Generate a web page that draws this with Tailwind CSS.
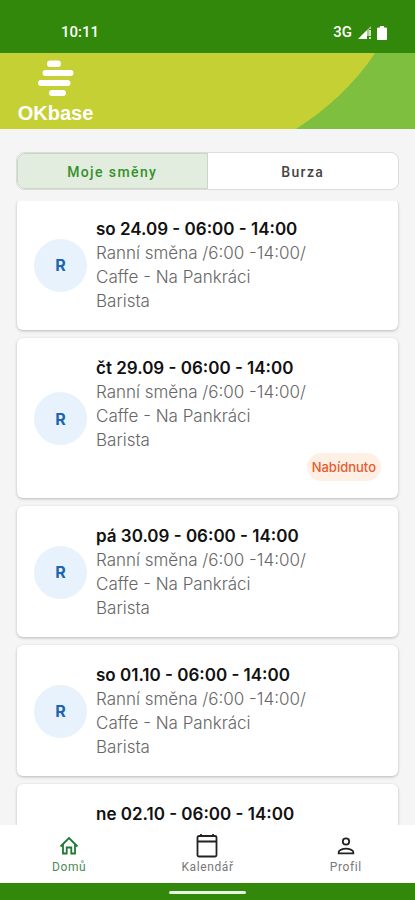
<!DOCTYPE html>
<html lang="cs">
<head>
<meta charset="utf-8">
<meta name="viewport" content="width=device-width, initial-scale=1">
<title>OKbase</title>
<script src="https://cdn.jsdelivr.net/npm/@tailwindcss/browser@4"></script>
</head>
<body class="flex h-screen flex-col overflow-hidden bg-[#f5f5f5] font-['Inter','Roboto',sans-serif]">
  <!-- Status bar -->
  <div class="flex h-[53px] shrink-0 items-center justify-between bg-[#31880a] pt-3 pr-7 pl-[61px] font-['Roboto',sans-serif] text-white">
    <span class="text-[15px] font-medium">10:11</span>
    <div class="flex items-center gap-1.5">
      <span class="text-[15px] font-medium">3G</span>
      <svg class="h-[13px] w-[13px]" viewBox="0 0 13 13" fill="currentColor" aria-hidden="true">
        <path d="M0 13 9 4v9z"/><path d="M9 4l4-4v3h-2v7H9z" opacity=".55"/><path d="M11 4h2v6h-2zM11 11h2v2h-2z" opacity=".75"/>
      </svg>
      <svg class="h-[14px] w-[10px]" viewBox="0 0 10 14" fill="currentColor" aria-hidden="true">
        <path d="M3 0h4v1.500h1.500c.8 0 1.500.5 1.500 1.300V13c0 .6-.4 1-1 1H1c-.6 0-1-.4-1-1V2.800C0 2 .7 1.500 1.500 1.500H3z"/>
      </svg>
    </div>
  </div>

  <!-- Brand header -->
  <header class="relative h-[76px] shrink-0 overflow-hidden bg-[#c5d034]">
    <svg class="absolute top-0 right-0 h-full w-[119px]" viewBox="0 0 119 76" aria-hidden="true">
      <path d="M79 0H119V76H0C31 56 58 32 79 0z" fill="#7fbf3f"/>
    </svg>
    <div class="relative flex w-[111px] flex-col items-center pt-[7px] text-white">
      <svg class="h-9 w-9" viewBox="0 0 36 36" fill="currentColor" aria-hidden="true">
        <rect x="9" y="0.500" width="14" height="6.500" rx="3.200"/>
        <rect x="4.500" y="10" width="31" height="6" rx="3"/>
        <rect x="0" y="20" width="32.500" height="6" rx="3"/>
        <rect x="11" y="30" width="17" height="6" rx="3"/>
      </svg>
      <span class="mt-[5px] text-xl leading-6 font-bold font-['Liberation_Sans',sans-serif]">OKbase</span>
    </div>
  </header>

  <!-- Tabs -->
  <div class="mx-4 mt-[23px] mb-[11px] grid h-[38px] shrink-0 grid-cols-2 overflow-hidden rounded-lg border border-[#dcdcdc] bg-white font-['Roboto',sans-serif] text-sm font-medium" role="tablist">
    <button class="rounded-l-lg border border-[#cbd6c7] bg-[#e2ecdf] pt-0.5 tracking-widest text-[#35912a]" role="tab" aria-selected="true">Moje směny</button>
    <button class="pt-0.5 tracking-widest text-[#444444]" role="tab" aria-selected="false">Burza</button>
  </div>

  <!-- Shift list -->
  <main class="min-h-0 flex-1 overflow-hidden px-[17px]">
    <ul class="-mt-0.5 flex flex-col gap-2">
      <li class="flex items-center gap-[9px] rounded-md bg-white px-[17px] pt-[18px] pb-[17px] shadow-[0_1px_3px_rgba(0,0,0,0.25)]">
        <span class="flex size-[53px] shrink-0 items-center justify-center rounded-full bg-[#e8f2fc] text-base font-bold text-[#1c66b0]">R</span>
        <div class="min-w-0 flex-1 text-[17px] leading-6 font-light text-[#666666]">
          <h2 class="font-semibold text-[#111111]">so 24.09 - 06:00 - 14:00</h2>
          <p>Ranní směna /6:00 -14:00/</p><p>Caffe - Na Pankráci</p><p>Barista</p>
        </div>
      </li>
      <li class="flex items-center gap-[9px] rounded-md bg-white px-[17px] pt-[18px] pb-[17px] shadow-[0_1px_3px_rgba(0,0,0,0.25)]">
        <span class="flex size-[53px] shrink-0 items-center justify-center rounded-full bg-[#e8f2fc] text-base font-bold text-[#1c66b0]">R</span>
        <div class="flex min-w-0 flex-1 flex-col text-[17px] leading-6 font-light text-[#666666]">
          <h2 class="font-semibold text-[#111111]">čt 29.09 - 06:00 - 14:00</h2>
          <p>Ranní směna /6:00 -14:00/</p><p>Caffe - Na Pankráci</p><p>Barista</p>
          <span class="mt-px flex h-7 items-center self-end rounded-full bg-[#fff0e5] px-[5px] text-[13px] font-medium text-[#ea5b2c]">Nabídnuto</span>
        </div>
      </li>
      <li class="flex items-center gap-[9px] rounded-md bg-white px-[17px] pt-[18px] pb-[17px] shadow-[0_1px_3px_rgba(0,0,0,0.25)]">
        <span class="flex size-[53px] shrink-0 items-center justify-center rounded-full bg-[#e8f2fc] text-base font-bold text-[#1c66b0]">R</span>
        <div class="min-w-0 flex-1 text-[17px] leading-6 font-light text-[#666666]">
          <h2 class="font-semibold text-[#111111]">pá 30.09 - 06:00 - 14:00</h2>
          <p>Ranní směna /6:00 -14:00/</p><p>Caffe - Na Pankráci</p><p>Barista</p>
        </div>
      </li>
      <li class="flex items-center gap-[9px] rounded-md bg-white px-[17px] pt-[18px] pb-[17px] shadow-[0_1px_3px_rgba(0,0,0,0.25)]">
        <span class="flex size-[53px] shrink-0 items-center justify-center rounded-full bg-[#e8f2fc] text-base font-bold text-[#1c66b0]">R</span>
        <div class="min-w-0 flex-1 text-[17px] leading-6 font-light text-[#666666]">
          <h2 class="font-semibold text-[#111111]">so 01.10 - 06:00 - 14:00</h2>
          <p>Ranní směna /6:00 -14:00/</p><p>Caffe - Na Pankráci</p><p>Barista</p>
        </div>
      </li>
      <li class="flex h-32 rounded-md bg-white pt-[18px] pr-[17px] pl-[79px] shadow-[0_1px_3px_rgba(0,0,0,0.25)]">
        <h2 class="text-[17px] leading-6 font-semibold text-[#111111]">ne 02.10 - 06:00 - 14:00</h2>
      </li>
    </ul>
  </main>

  <!-- Bottom navigation -->
  <nav class="relative grid h-[58px] shrink-0 grid-cols-3 bg-white font-['Roboto',sans-serif] text-xs leading-4 tracking-wider text-[#777777]">
    <a href="#" class="flex flex-col items-center pt-2 text-[#4c8a57]" aria-current="page">
      <svg class="size-[26px] text-[#1f7a34]" viewBox="0 0 26 26" fill="none" stroke="currentColor" stroke-width="1.800" aria-hidden="true">
        <path d="M4.500 13.500 13 5l8.500 8.500M7 11.500v9h3.700v-6h4.600v6H19v-9"/>
      </svg>
      <span>Domů</span>
    </a>
    <a href="#" class="flex flex-col items-center pt-2">
      <svg class="size-[26px] text-[#222222]" viewBox="0 0 26 26" fill="none" stroke="currentColor" stroke-width="1.800" aria-hidden="true">
        <rect x="3.500" y="3" width="19" height="20.500" rx="1.500"/><path d="M3.500 8.500h19M7 1v2.500M19 1v2.500"/>
      </svg>
      <span>Kalendář</span>
    </a>
    <a href="#" class="flex flex-col items-center pt-2">
      <svg class="size-[26px] text-[#222222]" viewBox="0 0 26 26" fill="none" stroke="currentColor" stroke-width="1.800" aria-hidden="true">
        <circle cx="13" cy="8.500" r="3.200"/><path d="M5.700 20.300v-1.300c0-2 4.300-3.300 7.300-3.300s7.300 1.300 7.300 3.300v1.300z"/>
      </svg>
      <span>Profil</span>
    </a>
  </nav>
  <div class="flex h-[17px] shrink-0 items-center justify-center bg-[#31880a] pt-px">
    <span class="h-[3px] w-[77px] rounded-full bg-[#e8f5e0]"></span>
  </div>
</body>
</html>
